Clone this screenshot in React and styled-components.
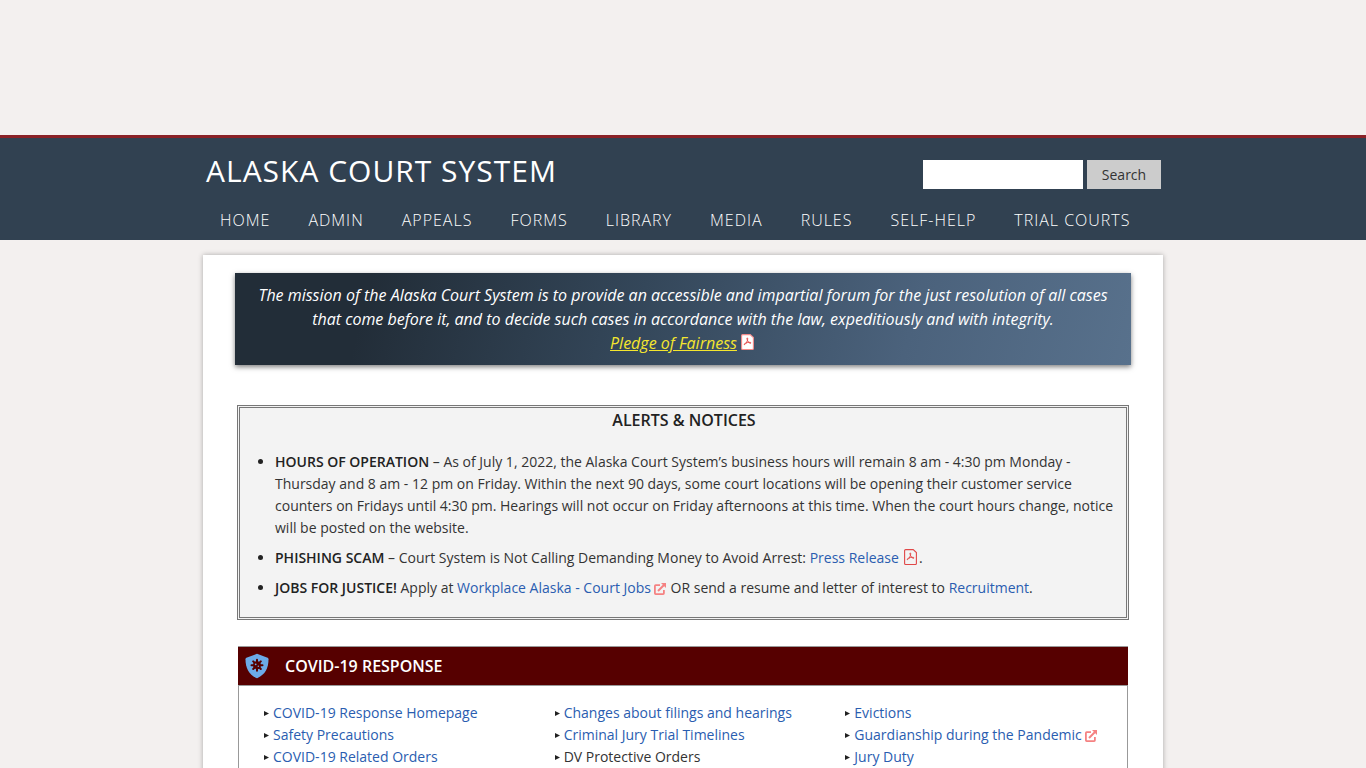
import React from "react";
import styled, { createGlobalStyle } from "styled-components";

const Global = createGlobalStyle`
  *, *::before, *::after { box-sizing: border-box; }
  body {
    margin: 0;
    background: #f3f0ef;
    color: #333;
    font-family: "Open Sans", "Liberation Sans", sans-serif;
    font-size: 14px;
    font-weight: 400;
    line-height: 22px;
  }
`;

const Page = styled.div`
  padding-top: 135px;
`;

const Header = styled.header`
  background: #314151;
  border-top: 3px solid #8a2127;
`;

const HeaderInner = styled.div`
  max-width: 960px;
  margin: 0 auto;
  padding: 11px 2px 0 3px;
`;

const TitleRow = styled.div`
  display: flex;
  justify-content: space-between;
  align-items: flex-start;
`;

const SiteTitle = styled.h1`
  margin: 0;
  color: #fff;
  font-size: 30px;
  font-weight: 400;
  line-height: 44px;
  letter-spacing: 1px;
`;

const SearchForm = styled.form`
  display: flex;
  gap: 4px;
  padding-top: 11px;
`;

const SearchInput = styled.input`
  width: 160px;
  height: 29px;
  padding: 0 8px;
  border: 0;
  background: #fff;
  font: inherit;
`;

const SearchButton = styled.button`
  height: 29px;
  width: 74px;
  padding: 0;
  border: 0;
  background: #ccc;
  color: #333;
  font: inherit;
`;

const Nav = styled.nav`
  display: flex;
  flex-wrap: wrap;
  gap: 38px;
  padding: 16px 14px 9px;
`;

const NavLink = styled.a`
  color: #fff;
  font-size: 16px;
  font-weight: 300;
  line-height: 22px;
  letter-spacing: 1px;
  text-decoration: none;
`;

const Main = styled.main`
  max-width: 960px;
  margin: 15px auto 0;
  padding: 18px 32px 40px;
  background: #fff;
  box-shadow: 0 0 5px rgba(0, 0, 0, 0.3);
`;

const Mission = styled.section`
  padding: 10px 20px;
  background: linear-gradient(105deg, #222d38 15%, #34475a 45%, #4b627c 75%, #58718c 100%);
  box-shadow: 0 2px 5px rgba(0, 0, 0, 0.5);
  color: #fff;
  font-size: 16px;
  font-style: italic;
  line-height: 24px;
  text-align: center;

  p { margin: 0; }
`;

const PledgeLink = styled.a`
  color: #f5e62e;
`;

const Link = styled.a`
  color: #2a5db0;
  text-decoration: none;
`;

const Alerts = styled.section`
  margin: 40px 2px 0;
  padding: 0 10px 18px 12px;
  border: 3px double #777;
  background: #f3f3f3;
`;

const AlertsTitle = styled.h2`
  margin: 0;
  color: #222;
  font-size: 16px;
  font-weight: 600;
  line-height: 24px;
  text-align: center;
`;

const AlertList = styled.ul`
  margin: 19px 0 0;
  padding: 0 0 0 23px;
`;

const AlertItem = styled.li`
  margin-bottom: 8px;

  &::marker { color: #222; }
  &:last-child { margin-bottom: 0; }
  strong { color: #222; font-weight: 600; }
`;

const Panel = styled.section`
  margin: 26px 3px 0;
  border: 1px solid #999;
`;

const PanelHeader = styled.div`
  display: flex;
  align-items: center;
  gap: 16px;
  margin: 0 -1px;
  padding: 0 7px;
  height: 39px;
  background: #560000;
  border-bottom: 1px solid #999;
`;

const PanelTitle = styled.h2`
  margin: 0;
  color: #fff;
  font-size: 16px;
  font-weight: 600;
  line-height: 24px;
`;

const Columns = styled.div`
  display: grid;
  grid-template-columns: repeat(3, 1fr);
  gap: 8px;
  padding: 16px 0 24px 24px;
`;

const LinkList = styled.ul`
  margin: 0;
  padding: 0;
  list-style: none;
`;

const LinkItem = styled.li`
  display: flex;
  align-items: center;
  gap: 3px;
  line-height: 22px;
`;

const Arrow = styled.svg`
  width: 7px;
  height: 6px;
  flex: none;
`;

const InlineIcon = styled.svg`
  display: inline-block;
  width: ${(p) => p.$w}px;
  height: ${(p) => p.$h}px;
  margin-left: ${(p) => p.$gap}px;
  margin-right: ${(p) => p.$after || 0}px;
  vertical-align: ${(p) => p.$align || "-2px"};
`;

function PdfIcon({ fill, border = "#e04848", align, gap, after }) {
  return (
    <InlineIcon $w={13} $h={16} $gap={gap} $after={after} $align={align} viewBox="0 0 13 16" aria-hidden="true">
      <path d="M1.6.6h7.6l3.2 3v10.9a1 1 0 0 1-1 1H1.6a1 1 0 0 1-1-1V1.6a1 1 0 0 1 1-1z" fill={fill} stroke={border} strokeWidth="1.1" />
      <path d="M6.2 3.9c.8 0 .5 1.9-.1 3.3-.7 1.700-1.900 3.500-2.700 3.400-1-.3.7-1.600 2.800-2 1.800-.4 4-.4 3.800.4-.2.8-1.900 0-2.700-1.200C6.300 6.500 5.500 3.900 6.200 3.900z" fill="none" stroke="#e23b3b" strokeWidth=".9" />
    </InlineIcon>
  );
}

function ExternalIcon() {
  return (
    <InlineIcon $w={12} $h={12} $gap={3} $after={1} $align="-2px" viewBox="0 0 12 12" fill="none" stroke="#f58282" aria-hidden="true">
      <path d="M6 2.100H1.700a.8.8 0 0 0-.8.8v7.400a.8.8 0 0 0 .8.8h7.400a.8.8 0 0 0 .8-.8V7" strokeWidth="1.800" />
      <path d="M4 8L10 2" strokeWidth="2" />
      <path d="M7 0H12v5z" fill="#f58282" stroke="none" />
    </InlineIcon>
  );
}

function ShieldIcon() {
  return (
    <svg width="24" height="26" viewBox="0 0 24 26" aria-hidden="true">
      <path d="M12 .8l10.600 4c.6.3.9.7.9 1.400C23.500 15 20 21.500 12.600 25a1.500 1.500 0 0 1-1.200 0C4 21.500.5 15 .5 6.200c0-.7.3-1.100.9-1.400z" fill="#6cabe8" />
      <g stroke="#560000" strokeWidth="2" strokeLinecap="round">
        <path d="M12 6.700v11M6.500 12.200h11M8.200 8.400l7.600 7.600M15.800 8.400l-7.600 7.600" />
      </g>
      <circle cx="12" cy="12.200" r="3.900" fill="#560000" />
      <circle cx="10.700" cy="11.300" r=".9" fill="#6cabe8" />
      <circle cx="13.300" cy="13.200" r=".7" fill="#6cabe8" />
    </svg>
  );
}

const navItems = ["Home", "Admin", "Appeals", "Forms", "Library", "Media", "Rules", "Self-Help", "Trial Courts"];

const covidLinks = [
  [{ text: "COVID-19 Response Homepage" }, { text: "Safety Precautions" }, { text: "COVID-19 Related Orders" }],
  [{ text: "Changes about filings and hearings" }, { text: "Criminal Jury Trial Timelines" }, { text: "DV Protective Orders", plain: true }],
  [{ text: "Evictions" }, { text: "Guardianship during the Pandemic", external: true }, { text: "Jury Duty" }],
];

export default function App() {
  return (
    <Page>
      <Global />
      <Header>
        <HeaderInner>
          <TitleRow>
            <SiteTitle>ALASKA COURT SYSTEM</SiteTitle>
            <SearchForm role="search" onSubmit={(e) => e.preventDefault()}>
              <SearchInput type="text" aria-label="Search" />
              <SearchButton type="submit">Search</SearchButton>
            </SearchForm>
          </TitleRow>
          <Nav>
            {navItems.map((item) => (
              <NavLink key={item} href="#">{item.toUpperCase()}</NavLink>
            ))}
          </Nav>
        </HeaderInner>
      </Header>
      <Main>
        <Mission>
          <p>
            The mission of the Alaska Court System is to provide an accessible and impartial forum for the just
            resolution of all cases that come before it, and to decide such cases in accordance with the law,
            expeditiously and with integrity.
          </p>
          <p>
            <PledgeLink href="#">Pledge of Fairness</PledgeLink>
            <PdfIcon fill="#fff" border="#f28a8a" align="-1px" gap={4} after={2} />
          </p>
        </Mission>
        <Alerts>
          <AlertsTitle>ALERTS &amp; NOTICES</AlertsTitle>
          <AlertList>
            <AlertItem>
              <strong>HOURS OF OPERATION</strong> – As of July 1, 2022, the Alaska Court System’s business hours will
              remain 8 am - 4:30 pm Monday - Thursday and 8 am - 12 pm on Friday. Within the next 90 days, some court
              locations will be opening their customer service counters on Fridays until 4:30 pm. Hearings will not
              occur on Friday afternoons at this time. When the court hours change, notice will be posted on the
              website.
            </AlertItem>
            <AlertItem>
              <strong>PHISHING SCAM</strong> – Court System is Not Calling Demanding Money to Avoid Arrest:{" "}
              <Link href="#">Press Release</Link>
              <PdfIcon fill="none" gap={5} after={2} />.
            </AlertItem>
            <AlertItem>
              <strong>JOBS FOR JUSTICE!</strong> Apply at <Link href="#">Workplace Alaska - Court Jobs</Link>
              <ExternalIcon /> OR send a resume and letter of interest to <Link href="#">Recruitment</Link>.
            </AlertItem>
          </AlertList>
        </Alerts>
        <Panel>
          <PanelHeader>
            <ShieldIcon />
            <PanelTitle>COVID-19 RESPONSE</PanelTitle>
          </PanelHeader>
          <Columns>
            {covidLinks.map((column) => (
              <LinkList key={column[0].text}>
                {column.map((item) => (
                  <LinkItem key={item.text}>
                    <Arrow viewBox="0 0 7 6" aria-hidden="true">
                      <path d="M1 1l5 2.500L1 6z" fill="#222" />
                    </Arrow>
                    <span>
                      {item.plain ? item.text : <Link href="#">{item.text}</Link>}
                      {item.external && <ExternalIcon />}
                    </span>
                  </LinkItem>
                ))}
              </LinkList>
            ))}
          </Columns>
        </Panel>
      </Main>
    </Page>
  );
}
